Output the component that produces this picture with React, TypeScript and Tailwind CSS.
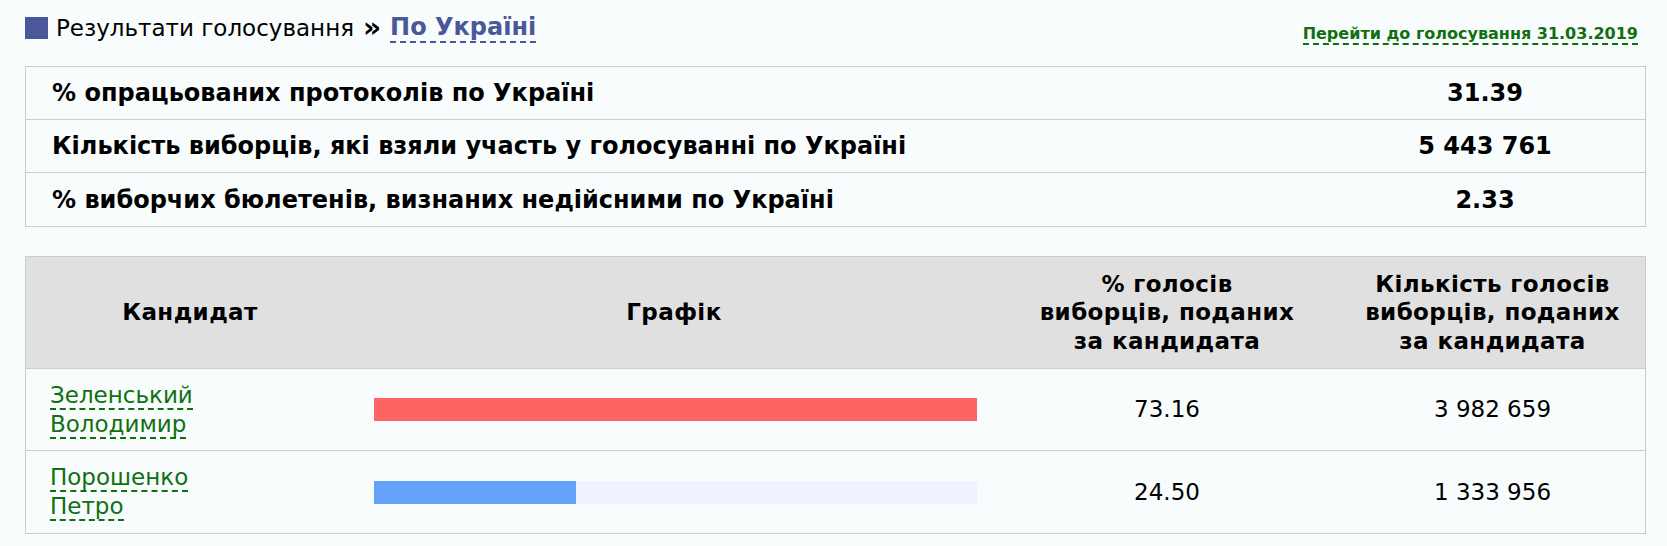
import React from "react";

const summary = [
  { label: "% опрацьованих протоколів по Україні", value: "31.39" },
  { label: "Кількість виборців, які взяли участь у голосуванні по Україні", value: "5 443 761" },
  { label: "% виборчих бюлетенів, визнаних недійсними по Україні", value: "2.33" },
];

const candidates = [
  { first: "Зеленський", last: "Володимир", pct: 73.16, votes: "3 982 659", color: "bg-[#ff6464]" },
  { first: "Порошенко", last: "Петро", pct: 24.5, votes: "1 333 956", color: "bg-[#64a2fa]" },
];

const maxPct = Math.max(...candidates.map((c) => c.pct));

function App() {
  return (
    <div className="min-h-[546px] w-full bg-[#f8fcfd] font-['DejaVu_Sans',Verdana,sans-serif] text-black">
      <div className="ml-[25px] w-[1621px]">
        {/* заголовок */}
        <div className="flex h-[56px] items-center justify-between">
          <div className="flex items-center text-[23px] leading-[28px]">
            <span className="mr-[8px] inline-block h-[22px] w-[23px] bg-[#4a5899]" />
            <span>Результати голосування</span>
            <span className="mx-[9px] text-[28px] font-bold leading-[28px]">»</span>
            <span className="border-b-2 border-dashed border-[#4a5899] text-[24px] font-bold leading-[27px] text-[#4a5899]">
              По Україні
            </span>
          </div>
          <span className="mr-[8px] mt-[12px] border-b-2 border-dashed border-[#107010] text-[16px] font-bold leading-[19px] text-[#107010]">
            Перейти до голосування 31.03.2019
          </span>
        </div>

        {/* підсумки */}
        <div className="mt-[10px] border border-[#cccccc]">
          {summary.map((row, i) => (
            <div
              key={row.label}
              className={
                "flex h-[53px] items-center text-[24px] font-bold " +
                (i < summary.length - 1 ? "border-b border-[#cccccc]" : "")
              }
            >
              <div className="flex-1 pl-[26px]">{row.label}</div>
              <div className="w-[320px] text-center">{row.value}</div>
            </div>
          ))}
        </div>

        {/* кандидати */}
        <div className="mt-[29px] border border-[#cccccc]">
          <div className="grid h-[112px] grid-cols-[328px_640px_346px_305px] items-center border-b border-[#cccccc] bg-[#e0e0e0] text-center text-[23px] font-bold leading-[28.5px] tracking-[0.4px]">
            <div>Кандидат</div>
            <div>Графік</div>
            <div>
              % голосів
              <br />
              виборців, поданих
              <br />
              за кандидата
            </div>
            <div>
              Кількість голосів
              <br />
              виборців, поданих
              <br />
              за кандидата
            </div>
          </div>
          {candidates.map((c, i) => (
            <div
              key={c.first}
              className={
                "grid h-[82px] grid-cols-[328px_640px_346px_305px] items-center text-[23px] " +
                (i < candidates.length - 1 ? "border-b border-[#cccccc]" : "")
              }
            >
              <div className="pl-[24px] leading-[29px] text-[#107010]">
                <span className="border-b-2 border-dashed border-[#107010]">{c.first}</span>
                <br />
                <span className="border-b-2 border-dashed border-[#107010]">{c.last}</span>
              </div>
              <div className="pl-[20px] pr-[17px]">
                <div className="h-[23px] w-full bg-[#eef3fd]">
                  <div className={"h-full " + c.color} style={{ width: `${(c.pct / maxPct) * 100}%` }} />
                </div>
              </div>
              <div className="text-center">{c.pct.toFixed(2)}</div>
              <div className="text-center">{c.votes}</div>
            </div>
          ))}
        </div>
      </div>
    </div>
  );
}

export default App;
